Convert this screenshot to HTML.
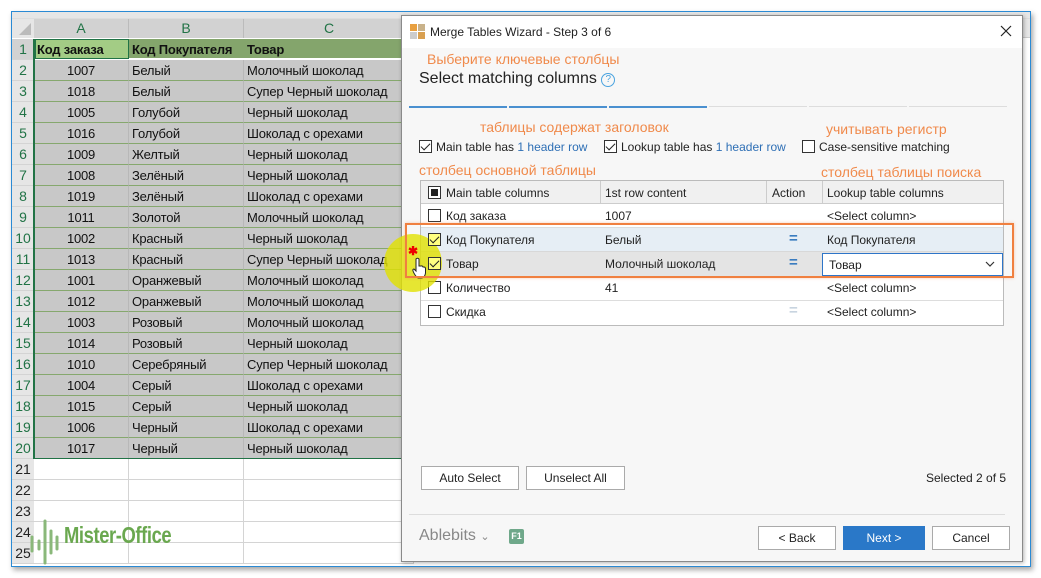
<!DOCTYPE html>
<html><head><meta charset="utf-8"><style>
*{box-sizing:border-box;margin:0;padding:0}
body{width:1041px;height:578px;background:#fff;position:relative;overflow:hidden;font-family:"Liberation Sans",sans-serif}
.a{position:absolute}
#frame{left:11px;top:11px;width:1020px;height:556px;border:1px solid #2a8ad4;box-shadow:2px 3px 5px rgba(0,0,0,.35);background:#fff;overflow:hidden}
.r{position:absolute;left:0;height:21px;width:1020px;font-size:13px;letter-spacing:-0.2px;line-height:21px;color:#111}
.r div{position:absolute;top:0;height:21px;white-space:nowrap;overflow:hidden}
.n{left:0;width:22px;text-align:center;background:#e6e6e6;border-bottom:1px solid #d4d4d4;color:#217346;font-size:14px;letter-spacing:0}
.ca{left:22px;width:95px;text-align:center}
.cb{left:117px;width:115px;padding-left:3px}
.cc{left:232px;width:170px;padding-left:3px}
.sel .ca,.sel .cb,.sel .cc{background:#c8c8c8;border-bottom:1px solid #86a86e;border-right:1px solid #b8b8b8}
.emp .ca,.emp .cb,.emp .cc{border-bottom:1px solid #d4d4d4;border-right:1px solid #d4d4d4}
.emp .n{color:#222}
#dlg{left:401px;top:15px;width:622px;height:547px;background:#f7f7f7;border:1px solid #8a8a8a;box-shadow:1px 1px 4px rgba(0,0,0,.3);font-size:12px;color:#222}
.or{color:#f08a4b;font-size:14px;position:absolute;white-space:nowrap}
.cb2{position:absolute;width:13px;height:13px;border:1px solid #333;background:#fff}
.tk::after{content:"";position:absolute;left:3px;top:0px;width:4px;height:8px;border:solid #222;border-width:0 1.5px 1.5px 0;transform:rotate(45deg)}
.t{position:absolute;white-space:nowrap}
.btn{position:absolute;height:24px;border:1px solid #aaa;background:#fff;text-align:center;line-height:22px;font-size:12px}
</style></head><body>
<div id="frame" class="a">
 <div class="a" style="left:0;top:0;width:1020px;height:26px;background:#e6e6e6;border-bottom:1px solid #ccc"></div>
 <div class="a" style="left:0;top:0;width:22px;height:26px;background:#e6e6e6"><div style="position:absolute;right:3px;bottom:3px;width:0;height:0;border-left:12px solid transparent;border-bottom:12px solid #bbb"></div></div>
 <div class="a" style="left:22px;top:6px;width:95px;height:20px;background:#d2d2d2;color:#217346;text-align:center;font-size:14px;line-height:20px;border-right:1px solid #bbb">A</div>
 <div class="a" style="left:117px;top:6px;width:115px;height:20px;background:#d2d2d2;color:#217346;text-align:center;font-size:14px;line-height:20px;border-right:1px solid #bbb">B</div>
 <div class="a" style="left:232px;top:6px;width:170px;height:20px;background:#d2d2d2;color:#217346;text-align:center;font-size:14px;line-height:20px">C</div>
 <div class="a" style="left:0;top:6px;width:1020px;height:1px;background:#ddd"></div>
 <div class="r" style="top:27px"><div class="n" style="background:#d2d2d2">1</div>
  <div class="a" style="left:22px;width:380px;height:21px;background:#84a56c;border-bottom:2px solid #fff"></div>
  <div class="a" style="left:23px;width:94px;height:20px;background:#a3cc85;border:1px solid #217346"></div>
  <div class="ca" style="text-align:left;padding-left:3px;font-weight:bold">Код заказа</div>
  <div class="cb" style="font-weight:bold">Код Покупателя</div>
  <div class="cc" style="font-weight:bold">Товар</div></div>
 <div class="r sel" style="top:48px"><div class="n">2</div><div class="ca">1007</div><div class="cb">Белый</div><div class="cc">Молочный шоколад</div></div>
 <div class="r sel" style="top:69px"><div class="n">3</div><div class="ca">1018</div><div class="cb">Белый</div><div class="cc">Супер Черный шоколад</div></div>
 <div class="r sel" style="top:90px"><div class="n">4</div><div class="ca">1005</div><div class="cb">Голубой</div><div class="cc">Черный шоколад</div></div>
 <div class="r sel" style="top:111px"><div class="n">5</div><div class="ca">1016</div><div class="cb">Голубой</div><div class="cc">Шоколад с орехами</div></div>
 <div class="r sel" style="top:132px"><div class="n">6</div><div class="ca">1009</div><div class="cb">Желтый</div><div class="cc">Черный шоколад</div></div>
 <div class="r sel" style="top:153px"><div class="n">7</div><div class="ca">1008</div><div class="cb">Зелёный</div><div class="cc">Черный шоколад</div></div>
 <div class="r sel" style="top:174px"><div class="n">8</div><div class="ca">1019</div><div class="cb">Зелёный</div><div class="cc">Шоколад с орехами</div></div>
 <div class="r sel" style="top:195px"><div class="n">9</div><div class="ca">1011</div><div class="cb">Золотой</div><div class="cc">Молочный шоколад</div></div>
 <div class="r sel" style="top:216px"><div class="n">10</div><div class="ca">1002</div><div class="cb">Красный</div><div class="cc">Черный шоколад</div></div>
 <div class="r sel" style="top:237px"><div class="n">11</div><div class="ca">1013</div><div class="cb">Красный</div><div class="cc">Супер Черный шоколад</div></div>
 <div class="r sel" style="top:258px"><div class="n">12</div><div class="ca">1001</div><div class="cb">Оранжевый</div><div class="cc">Молочный шоколад</div></div>
 <div class="r sel" style="top:279px"><div class="n">13</div><div class="ca">1012</div><div class="cb">Оранжевый</div><div class="cc">Молочный шоколад</div></div>
 <div class="r sel" style="top:300px"><div class="n">14</div><div class="ca">1003</div><div class="cb">Розовый</div><div class="cc">Молочный шоколад</div></div>
 <div class="r sel" style="top:321px"><div class="n">15</div><div class="ca">1014</div><div class="cb">Розовый</div><div class="cc">Черный шоколад</div></div>
 <div class="r sel" style="top:342px"><div class="n">16</div><div class="ca">1010</div><div class="cb">Серебряный</div><div class="cc">Супер Черный шоколад</div></div>
 <div class="r sel" style="top:363px"><div class="n">17</div><div class="ca">1004</div><div class="cb">Серый</div><div class="cc">Шоколад с орехами</div></div>
 <div class="r sel" style="top:384px"><div class="n">18</div><div class="ca">1015</div><div class="cb">Серый</div><div class="cc">Черный шоколад</div></div>
 <div class="r sel" style="top:405px"><div class="n">19</div><div class="ca">1006</div><div class="cb">Черный</div><div class="cc">Шоколад с орехами</div></div>
 <div class="r sel" style="top:426px"><div class="n">20</div><div class="ca">1017</div><div class="cb">Черный</div><div class="cc">Черный шоколад</div></div>
 <div class="r emp" style="top:447px"><div class="n">21</div><div class="ca"></div><div class="cb"></div><div class="cc"></div></div>
 <div class="r emp" style="top:468px"><div class="n">22</div><div class="ca"></div><div class="cb"></div><div class="cc"></div></div>
 <div class="r emp" style="top:489px"><div class="n">23</div><div class="ca"></div><div class="cb"></div><div class="cc"></div></div>
 <div class="r emp" style="top:510px"><div class="n">24</div><div class="ca"></div><div class="cb"></div><div class="cc"></div></div>
 <div class="r emp" style="top:531px"><div class="n">25</div><div class="ca"></div><div class="cb"></div><div class="cc"></div></div>
 <div class="a" style="left:21px;top:27px;width:2px;height:420px;background:#217346"></div>
 <div class="a" style="left:22px;top:446px;width:380px;height:1px;background:#217346"></div>
 <svg class="a" style="left:14px;top:505px" width="60" height="50"><g stroke="#8ab87a" stroke-width="3" stroke-linecap="round"><line x1="6" y1="20" x2="6" y2="34"/><line x1="13" y1="24" x2="13" y2="32"/><line x1="19" y1="4" x2="19" y2="46"/><line x1="25" y1="14" x2="25" y2="36"/><line x1="31" y1="20" x2="31" y2="32"/></g></svg>
 <div class="a" style="left:52px;top:510px;font-size:23px;font-weight:bold;color:#6aa84f;letter-spacing:-0.5px;transform:scaleX(.8);transform-origin:left">Mister-Office</div>
</div>

<div id="dlg" class="a">
 <div class="a" style="left:0;top:0;width:620px;height:32px;background:#fff"></div>
 <svg class="a" style="left:8px;top:8px" width="16" height="16"><rect x="0" y="0" width="7" height="7" fill="#e8a040"/><rect x="8" y="0" width="7" height="7" fill="#c9b28a"/><rect x="0" y="8" width="7" height="7" fill="#ccc"/><rect x="8" y="8" width="7" height="7" fill="#d9a050"/></svg>
 <div class="t" style="left:28px;top:9px;font-size:12px">Merge Tables Wizard - Step 3 of 6</div>
 <svg class="a" style="left:598px;top:9px" width="12" height="12"><path d="M1 1L11 11M11 1L1 11" stroke="#222" stroke-width="1.2"/></svg>
 <div class="or" style="left:25px;top:35px">Выберите ключевые столбцы</div>
 <div class="t" style="left:17px;top:54px;font-size:16px">Select matching columns <span style="display:inline-block;width:14px;height:14px;border:1px solid #4aa3df;border-radius:50%;color:#4aa3df;font-size:10px;text-align:center;line-height:12px;vertical-align:1px">?</span></div>
 <div class="a" style="left:7px;top:90px;width:98px;height:2px;background:#4a90d0"></div>
 <div class="a" style="left:107px;top:90px;width:98px;height:2px;background:#4a90d0"></div>
 <div class="a" style="left:207px;top:90px;width:98px;height:2px;background:#4a90d0"></div>
 <div class="a" style="left:307px;top:90px;width:98px;height:1px;background:#ddd"></div>
 <div class="a" style="left:407px;top:90px;width:98px;height:1px;background:#ddd"></div>
 <div class="a" style="left:507px;top:90px;width:98px;height:1px;background:#ddd"></div>
 <div class="or" style="left:78px;top:103px">таблицы содержат заголовок</div>
 <div class="or" style="left:424px;top:105px">учитывать регистр</div>
 <div class="cb2 tk" style="left:17px;top:124px"></div><div class="t" style="left:34px;top:124px">Main table has <span style="color:#2e6fb5">1 header row</span></div>
 <div class="cb2 tk" style="left:202px;top:124px"></div><div class="t" style="left:219px;top:124px">Lookup table has <span style="color:#2e6fb5">1 header row</span></div>
 <div class="cb2" style="left:400px;top:124px"></div><div class="t" style="left:417px;top:124px">Case-sensitive matching</div>
 <div class="or" style="left:17px;top:146px">столбец основной таблицы</div>
 <div class="or" style="left:419px;top:148px">столбец таблицы поиска</div>
 <div class="a" style="left:18px;top:164px;width:584px;height:146px;background:#fff;border:1px solid #bbb"></div>
 <div class="a" style="left:19px;top:165px;width:582px;height:23px;background:#f0f0f0;border-bottom:1px solid #ccc"></div>
 <div class="a" style="left:198px;top:165px;width:1px;height:23px;background:#ccc"></div>
 <div class="a" style="left:364px;top:165px;width:1px;height:23px;background:#ccc"></div>
 <div class="a" style="left:420px;top:165px;width:1px;height:23px;background:#ccc"></div>
 <div class="cb2" style="left:26px;top:170px"><div style="position:absolute;left:2px;top:2px;width:7px;height:7px;background:#222"></div></div>
 <div class="t" style="left:44px;top:170px">Main table columns</div>
 <div class="t" style="left:203px;top:170px">1st row content</div>
 <div class="t" style="left:370px;top:170px">Action</div>
 <div class="t" style="left:425px;top:170px">Lookup table columns</div>
 <div class="a" style="left:19px;top:212px;width:582px;height:24px;background:#e6eef5;border-bottom:1px solid #d8d8d8"></div>
 <div class="a" style="left:19px;top:236px;width:582px;height:24px;background:#e4e4e4"></div>
 <div class="a" style="left:19px;top:211px;width:582px;height:1px;background:#ddd"></div>
 <div class="a" style="left:19px;top:284px;width:582px;height:1px;background:#ddd"></div>
 <div class="a" style="left:19px;top:260px;width:582px;height:1px;background:#ddd"></div>
 <div class="cb2" style="left:26px;top:193px"></div><div class="t" style="left:44px;top:193px">Код заказа</div><div class="t" style="left:203px;top:193px">1007</div><div class="t" style="left:425px;top:193px">&lt;Select column&gt;</div>
 <div class="t" style="left:44px;top:217px">Код Покупателя</div><div class="t" style="left:203px;top:217px">Белый</div><div class="t" style="left:387px;top:214px;color:#3a7cc0;font-weight:bold;font-size:15px">=</div><div class="t" style="left:425px;top:217px">Код Покупателя</div>
 <div class="t" style="left:44px;top:241px">Товар</div><div class="t" style="left:203px;top:241px">Молочный шоколад</div><div class="t" style="left:387px;top:238px;color:#3a7cc0;font-weight:bold;font-size:15px">=</div>
 <div class="a" style="left:420px;top:237px;width:181px;height:23px;background:#fff;border:1px solid #2e75c8"></div><div class="t" style="left:427px;top:242px">Товар</div>
 <svg class="a" style="left:583px;top:245px" width="10" height="6"><path d="M1 1L5 5L9 1" fill="none" stroke="#333" stroke-width="1.2"/></svg>
 <div class="cb2" style="left:26px;top:265px"></div><div class="t" style="left:44px;top:265px">Количество</div><div class="t" style="left:203px;top:265px">41</div><div class="t" style="left:425px;top:265px">&lt;Select column&gt;</div>
 <div class="cb2" style="left:26px;top:289px"></div><div class="t" style="left:44px;top:289px">Скидка</div><div class="t" style="left:387px;top:286px;color:#c8d4e0;font-weight:bold;font-size:15px">=</div><div class="t" style="left:425px;top:289px">&lt;Select column&gt;</div>
 <div class="a" style="left:-18px;top:218px;width:58px;height:58px;border-radius:50%;background:rgba(225,225,0,.8)"></div>
 <div class="cb2 tk" style="left:26px;top:217px;background:#ffff80"></div>
 <div class="cb2 tk" style="left:26px;top:241px;background:#ffff80"></div>
 <svg class="a" style="left:9px;top:241px" width="16" height="22"><path d="M5 2 Q6.5 0.5 8 2 L8 9 L10 9 Q11.5 8.5 12 10 L13 10 Q14.5 10 14.5 12 L14.5 16 Q14 20 11 21 L7 21 Q4 19 2 14 Q1.5 12 3 12 L5 14 Z" fill="#fff" stroke="#222" stroke-width="1"/></svg>
 <div class="t" style="left:6px;top:228px;color:#e00;font-size:12px;font-weight:bold">✱</div>
 <div class="a" style="left:3px;top:207px;width:609px;height:55px;border:2px solid #f08040;box-shadow:0 0 3px rgba(240,128,64,.4)"></div>
 <div class="btn" style="left:19px;top:450px;width:98px">Auto Select</div>
 <div class="btn" style="left:124px;top:450px;width:99px">Unselect All</div>
 <div class="t" style="left:524px;top:455px">Selected 2 of 5</div>
 <div class="a" style="left:7px;top:498px;width:596px;height:1px;background:#ddd"></div>
 <div class="t" style="left:17px;top:511px;font-size:16px;color:#888">Ablebits <span style="font-size:11px">⌄</span></div>
 <div class="a" style="left:107px;top:513px;width:15px;height:15px;background:#6fa88a;border-radius:2px;color:#fff;font-size:9px;font-weight:bold;text-align:center;line-height:15px">F1</div>
 <div class="btn" style="left:356px;top:510px;width:78px">&lt; Back</div>
 <div class="btn" style="left:441px;top:510px;width:82px;background:#2a78c8;border-color:#2a78c8;color:#fff">Next &gt;</div>
 <div class="btn" style="left:530px;top:510px;width:78px">Cancel</div>
</div>
</body></html>
